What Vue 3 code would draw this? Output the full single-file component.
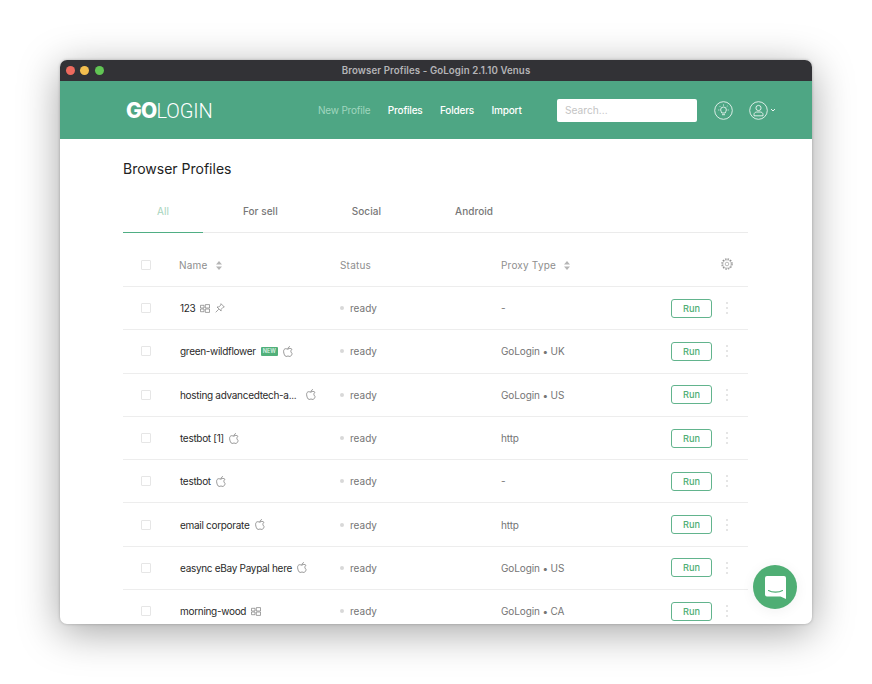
<script setup>
const rows = [
  { name: '123', win: true, pin: true, proxy: '-' },
  { name: 'green-wildflower', isNew: true, apple: true, proxy: 'GoLogin • UK' },
  { name: 'hosting advancedtech-a...', apple: true, wide: true, proxy: 'GoLogin • US' },
  { name: 'testbot [1]', apple: true, proxy: 'http' },
  { name: 'testbot', apple: true, proxy: '-' },
  { name: 'email corporate', apple: true, proxy: 'http' },
  { name: 'easync eBay Paypal here', apple: true, proxy: 'GoLogin • US' },
  { name: 'morning-wood', win: true, proxy: 'GoLogin • CA' },
]
const tabs = ['All', 'For sell', 'Social', 'Android']
const nav = ['New Profile', 'Profiles', 'Folders', 'Import']
</script>

<template>
  <div class="stage">
    <div class="window">
      <div class="titlebar">
        <div class="lights"><i class="red"></i><i class="yellow"></i><i class="green"></i></div>
        <span class="title">Browser Profiles - GoLogin 2.1.10 Venus</span>
      </div>
      <header class="header">
        <div class="logo"><b>GO</b><span>LOGIN</span></div>
        <nav class="nav">
          <a v-for="(n, i) in nav" :key="n" :class="{ dim: i === 0 }">{{ n }}</a>
        </nav>
        <div class="search">Search...</div>
        <svg class="hicon bulb" width="19" height="19" viewBox="0 0 19 19" fill="none" stroke="#fff" stroke-width=".8">
          <circle cx="9.500" cy="9.500" r="8.800" />
          <path d="M7.800 12c0-1.300-1.200-1.600-1.200-3.100a2.900 2.900 0 0 1 5.800 0c0 1.500-1.200 1.800-1.200 3.100zM8 13.700h3M9.500 3.500v1.100M5.500 5l.7.700M13.500 5l-.7.700M4.300 9h1M13.700 9h1" />
        </svg>
        <svg class="hicon user" width="19" height="19" viewBox="0 0 19 19" fill="none" stroke="#fff" stroke-width=".8">
          <circle cx="9.500" cy="9.500" r="8.800" />
          <circle cx="9.500" cy="7" r="2.600" />
          <path d="M5 14.800v-1.300c0-1.500 1.300-2.500 2.800-2.500h3.400c1.500 0 2.800 1 2.800 2.500v1.300z" />
        </svg>
        <svg class="chev" width="6" height="4" viewBox="0 0 6 4" fill="none" stroke="#fff" stroke-width=".9"><path d="M1 1l2 2 2-2" /></svg>
      </header>
      <main class="content">
        <h1>Browser Profiles</h1>
        <div class="tabs">
          <div v-for="(t, i) in tabs" :key="t" class="tab" :class="{ active: i === 0 }">{{ t }}</div>
        </div>
        <div class="row head">
          <span class="box"></span>
          <span class="hcell">Name
            <svg width="6" height="9" viewBox="0 0 6 9" fill="#b5b5b5"><path d="M3 0l3 3.500H0zM3 9L0 5.500h6z" /></svg>
          </span>
          <span class="hcell">Status</span>
          <span class="hcell">Proxy Type
            <svg width="6" height="9" viewBox="0 0 6 9" fill="#b5b5b5"><path d="M3 0l3 3.500H0zM3 9L0 5.500h6z" /></svg>
          </span>
          <svg class="gear" width="12" height="12" viewBox="0 0 12 12" fill="none" stroke="#8f8f8f">
            <circle cx="6" cy="6" r="5.100" stroke-width="1.200" stroke-dasharray="1.500 1.170" />
            <circle cx="6" cy="6" r="4.200" stroke-width=".6" />
            <circle cx="6" cy="6" r="1.800" stroke-width=".6" />
          </svg>
        </div>
        <div v-for="r in rows" :key="r.name" class="row">
          <span class="box"></span>
          <span class="name" :class="{ wide: r.wide }">
            <span class="ntext">{{ r.name }}</span>
            <span v-if="r.isNew" class="new">NEW</span>
            <svg v-if="r.win" class="ico" width="10" height="9" viewBox="0 0 10 9" fill="none" stroke="#7d7d7d" stroke-width=".7">
              <path d="M.5 1.300h3.500v2.700H.5zM5.300 .6h4.200v3.400H5.300zM.5 5h3.500v2.700H.5zM5.300 5h4.200v3.400H5.300z" />
            </svg>
            <svg v-if="r.pin" class="ico" width="10" height="10" viewBox="0 0 10 10" fill="none" stroke="#7d7d7d" stroke-width=".7">
              <path d="M6 .7l3.300 3.300-1.200.3-2 2 0 1.700L2 4l1.800 0 2-2zM3.800 6.200L.7 9.300" />
            </svg>
            <svg v-if="r.apple" class="ico" width="10" height="11" viewBox="0 0 10 11" fill="none" stroke="#6f6f6f" stroke-width=".7">
              <path d="M5 3.200c-.6 0-1.500-.6-2.400-.5C1.300 2.800.5 4 .6 5.600c.1 2 1.300 4.900 2.500 4.900.7 0 1.100-.5 1.900-.5s1.200.5 1.900.5c.9 0 1.900-1.700 2.300-3-1.700-.8-1.800-3.200-.2-4.100-.6-.8-1.500-1-2.200-1-.9 0-1.300.6-1.800.6zM5 2.900C4.900 1.800 5.800.7 7 .5" />
            </svg>
          </span>
          <span class="status"><i class="dot"></i>ready</span>
          <span class="proxy">{{ r.proxy }}</span>
          <span class="actions">
            <button class="run">Run</button>
            <span class="more"><i></i><i></i><i></i></span>
          </span>
        </div>
        <div class="chat">
          <svg width="21" height="23" viewBox="0 0 21 23">
            <path d="M2 0h17a2 2 0 0 1 2 2v21l-5.500-2.600H2a2 2 0 0 1-2-2V2a2 2 0 0 1 2-2z" fill="#fff" />
            <path d="M3.500 14.500c3.500 2.200 10.500 2.200 14 0" fill="none" stroke="#4fae74" stroke-width="1.100" stroke-linecap="round" />
          </svg>
        </div>
      </main>
    </div>
  </div>
</template>

<style>
html, body { margin: 0; background: #fff; }
</style>

<style scoped>
.stage {
  width: 872px;
  height: 684px;
  padding: 60px 0 0 60px;
  box-sizing: border-box;
  overflow: hidden;
  font-family: Inter, "Liberation Sans", sans-serif;
}
.window {
  width: 752px;
  height: 564px;
  border-radius: 7px;
  overflow: hidden;
  background: #fff;
  position: relative;
  box-shadow: 0 8px 40px rgba(0, 0, 0, .36), 0 0 3px rgba(0, 0, 0, .25);
  display: flex;
  flex-direction: column;
}
.titlebar {
  height: 21px;
  flex: none;
  background: #323236;
  display: flex;
  align-items: center;
  justify-content: center;
  position: relative;
}
.lights { position: absolute; left: 5.500px; top: 6px; display: flex; gap: 5.700px; }
.lights i { width: 9px; height: 9px; border-radius: 50%; display: block; }
.red { background: #ed6a5e; }
.yellow { background: #f4bf4f; }
.green { background: #61c554; }
.title { color: #b4b4b7; font-size: 9.700px; font-weight: 600; letter-spacing: .1px; }
.header {
  height: 58px;
  flex: none;
  background: #4ea684;
  display: flex;
  align-items: center;
  position: relative;
  color: #fff;
}
.logo {
  margin-left: 66px;
  width: 192px;
  display: flex;
  align-items: baseline;
}
.logo b { font-family: Inter, sans-serif; font-weight: 800; letter-spacing: -.8px; font-size: 21px; }
.logo span { font-family: Roboto, sans-serif; font-weight: 300; font-size: 20px; letter-spacing: -.1px; }
.nav { display: flex; gap: 17.500px; width: 239px; font-size: 10px; font-weight: 500; letter-spacing: -.2px; }
.nav .dim { color: #a0d6bf; font-weight: 400; }
.search {
  width: 140px;
  height: 23px;
  box-sizing: border-box;
  background: #fff;
  border-radius: 2px;
  color: #c4c4c4;
  font-size: 10.200px;
  line-height: 23px;
  padding-left: 8px;
}
.hicon { display: block; flex: none; }
.bulb { margin-left: 17px; }
.user { margin-left: 16px; }
.chev { margin-left: 2px; }
.content { padding: 0 64px 0 63px; position: relative; flex: 1; overflow: hidden; }
h1 { margin: 21px 0 0; font-size: 14px; font-weight: 400; line-height: 18px; color: #222; height: 18px; }
.tabs { display: flex; gap: 6px; margin-top: 12px; height: 43px; border-bottom: 1px solid #ebebeb; box-sizing: border-box; }
.tab {
  padding: 0 34px;
  font-size: 10px;
  font-weight: 500;
  color: #777;
  line-height: 43px;
  height: 43px;
  box-sizing: border-box;
  letter-spacing: .05px;
}
.tab.active { color: #a6d3bc; border-bottom: 1px solid #4fae84; font-weight: 400; }
.row {
  display: grid;
  grid-template-columns: 56px 161px 161px 1fr auto;
  align-items: center;
  height: 43.300px;
  box-sizing: border-box;
  border-bottom: 1px solid #ededed;
  font-size: 10px;
  color: #757575;
}
.row.head { height: 54px; padding-top: 11px; }
.box {
  width: 10px;
  height: 10px;
  margin-left: 18px;
  border: 1px solid #e6e6e6;
  border-radius: 1px;
  box-sizing: border-box;
}
.hcell { color: #8e8e8e; display: flex; align-items: center; gap: 8px; letter-spacing: .2px; }
.gear { margin-right: 15px; margin-top: -2px; }
.name { display: flex; align-items: center; gap: 5px; color: #2a2a2a; padding-left: 1px; font-size: 10px; letter-spacing: -.3px; }
.name.wide { gap: 10px; }
.ico { flex: none; }
.new {
  background: #51b07a;
  color: #dff3e7;
  font-size: 5.500px;
  font-weight: 600;
  padding: 1px 2px;
  height: 7px;
  line-height: 7px;
  border-radius: 1px;
  letter-spacing: 0;
}
.status { display: flex; align-items: center; }
.dot { width: 4px; height: 4px; background: #d8d8d8; border-radius: 50%; margin-right: 6px; }
.proxy { letter-spacing: -.12px; }
.actions { display: flex; align-items: center; }
.run {
  width: 41px;
  height: 19px;
  padding: 0;
  box-sizing: border-box;
  border: 1px solid #62b48d;
  border-radius: 3px;
  background: #fff;
  color: #4fae74;
  font: 500 9.200px Inter, sans-serif;
}
.more { display: flex; flex-direction: column; gap: 3px; margin: 0 20px 0 14px; }
.more i { width: 2px; height: 2px; background: #dcdcdc; display: block; border-radius: 50%; }
.chat {
  position: absolute;
  right: 15px;
  bottom: 15px;
  width: 44px;
  height: 44px;
  border-radius: 50%;
  background: #4fae74;
  display: flex;
  align-items: center;
  justify-content: center;
  box-shadow: 0 2px 14px rgba(0, 0, 0, .06);
}
</style>
